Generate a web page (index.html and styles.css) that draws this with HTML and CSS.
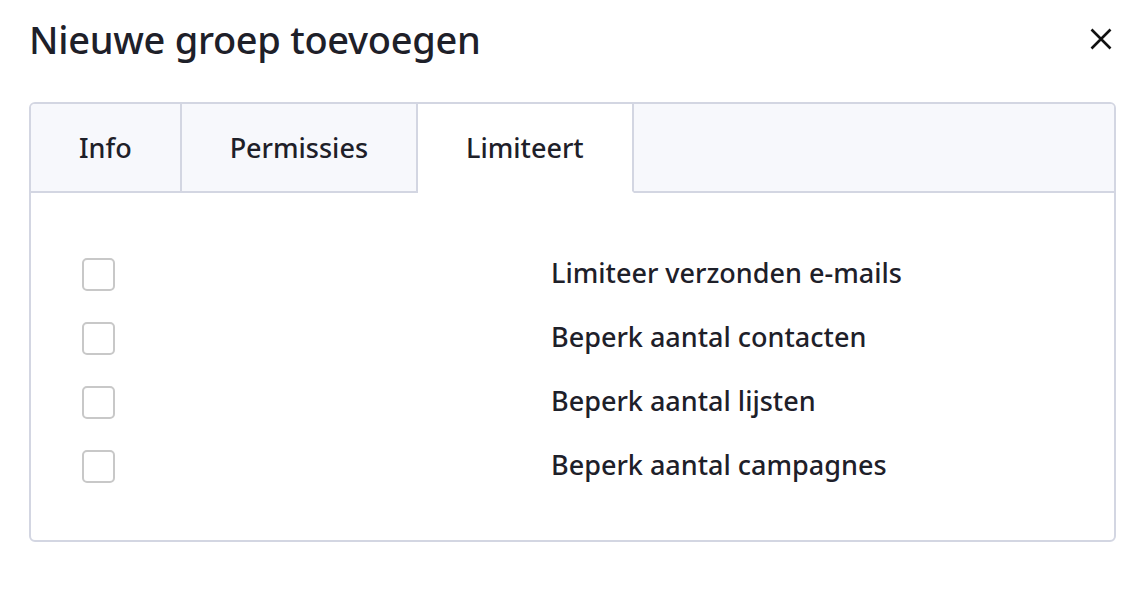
FILE: index.html
```html
<!DOCTYPE html>
<html lang="nl">
<head>
    <meta charset="UTF-8">
    <meta name="viewport" content="width=device-width, initial-scale=1.0">
    <title>Nieuwe groep toevoegen</title>
    <link rel="stylesheet" href="styles.css">
</head>
<body>
    <div class="modal">
        <div class="modal-header">
            <h2 class="modal-title">Nieuwe groep toevoegen</h2>
            <button class="close-modal" aria-label="Sluiten">
                <svg width="24" height="24" viewBox="0 0 24 24">
                    <path d="M2.5 2.5 L21.5 21.5 M21.5 2.5 L2.5 21.5" stroke="#111" stroke-width="2.6" fill="none"/>
                </svg>
            </button>
        </div>

        <!-- Tabs -->
        <div class="tabs-box">
            <div class="tab-bar">
                <div class="tab">Info</div>
                <div class="tab">Permissies</div>
                <div class="tab active">Limiteert</div>
                <div class="tab-filler"></div>
            </div>

            <div class="tab-body">
                <div class="limit-row">
                    <span class="checkbox"></span>
                    <span class="limit-label">Limiteer verzonden e-mails</span>
                </div>
                <div class="limit-row">
                    <span class="checkbox"></span>
                    <span class="limit-label">Beperk aantal contacten</span>
                </div>
                <div class="limit-row">
                    <span class="checkbox"></span>
                    <span class="limit-label">Beperk aantal lijsten</span>
                </div>
                <div class="limit-row">
                    <span class="checkbox"></span>
                    <span class="limit-label">Beperk aantal campagnes</span>
                </div>
            </div>
        </div>
    </div>
</body>
</html>
```

FILE: styles.css
```css
body {
    margin: 0;
    background: #fff;
    color: #1e2029;
    font-family: "Noto Sans", "Open Sans", sans-serif;
}

.modal {
    padding: 0 32px 0 29px;
}

.modal-header {
    display: flex;
    justify-content: space-between;
    align-items: center;
    height: 78px;
}

.modal-title {
    margin: 0;
    font-size: 38px;
    font-weight: 500;
    letter-spacing: -0.3px;
}

.close-modal {
    background: none;
    border: none;
    padding: 0;
    margin-right: 3px;
    cursor: pointer;
    display: flex;
}

.tabs-box {
    margin-top: 24px;
    border: 2px solid #d3d6e2;
    border-radius: 6px;
    overflow: hidden;
}

.tab-bar {
    display: flex;
    height: 89px;
    background: #f7f8fc;
}

.tab {
    display: flex;
    align-items: center;
    padding: 0 48px;
    font-size: 27px;
    font-weight: 500;
    border-right: 2px solid #d3d6e2;
    border-bottom: 2px solid #d3d6e2;
}

.tab.active {
    background: #fff;
    border-bottom-color: transparent;
}

.tab-filler {
    flex: 1;
    border-bottom: 2px solid #d3d6e2;
}

.tab-body {
    display: flex;
    flex-direction: column;
    gap: 31px;
    padding: 61px 50px 61px 51px;
}

.limit-row {
    display: grid;
    grid-template-columns: 469px 1fr;
    align-items: center;
    height: 33px;
}

.checkbox {
    width: 29px;
    height: 29px;
    border: 2px solid #c8c8c8;
    border-radius: 5px;
}

.limit-label {
    font-size: 27px;
    font-weight: 500;
    padding-bottom: 4px;
}
```
